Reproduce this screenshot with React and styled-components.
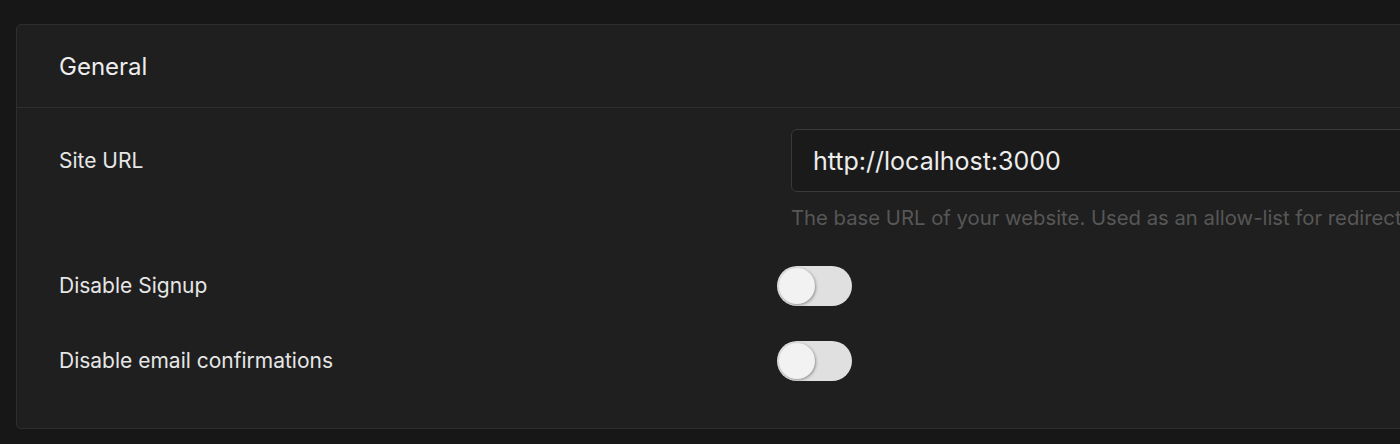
import React, { useState } from 'react';
import styled, { createGlobalStyle } from 'styled-components';

const GlobalStyle = createGlobalStyle`
  html, body {
    margin: 0;
    padding: 0;
    background: #171717;
    overflow: hidden;
  }
  body {
    font-family: 'Inter', 'Noto Sans', sans-serif;
  }
`;

const Page = styled.div`
  width: 1400px;
  height: 444px;
  padding: 24px 0 0 16px;
  box-sizing: border-box;
  overflow: hidden;
`;

const Card = styled.section`
  width: 1440px;
  background: #1f1f1f;
  border: 1px solid #2e2e2e;
  border-radius: 5px;
  box-sizing: border-box;
`;

const CardHeader = styled.header`
  height: 83px;
  display: flex;
  align-items: center;
  padding-left: 42px;
  border-bottom: 1px solid #2e2e2e;
  box-sizing: border-box;
`;

const Title = styled.h2`
  margin: 0;
  font-size: 24px;
  font-weight: 400;
  color: #ededed;
`;

const CardBody = styled.div`
  padding: 21px 0 47px 42px;
  display: flex;
  flex-direction: column;
`;

const Row = styled.div`
  display: grid;
  grid-template-columns: 718px 1fr;
  align-items: ${p => (p.top ? 'start' : 'center')};
  margin-bottom: ${p => p.gap || 0}px;
`;

const Label = styled.label`
  font-size: 21px;
  color: #e6e6e6;
  line-height: ${p => (p.tall ? '63px' : '40px')};
`;

const Field = styled.div`
  display: flex;
  flex-direction: column;
  padding-left: 14px;
`;

const Input = styled.input`
  height: 63px;
  width: 700px;
  box-sizing: border-box;
  background: #1a1a1a;
  border: 1px solid #3a3a3a;
  border-radius: 6px;
  padding: 0 21px;
  font-family: inherit;
  font-size: 25px;
  color: #ededed;
  outline: none;
`;

const Help = styled.p`
  margin: 14px 0 0;
  font-size: 20.3px;
  line-height: 24px;
  color: #575757;
  white-space: nowrap;
`;

const Track = styled.button`
  width: 75px;
  height: 40px;
  border-radius: 20px;
  border: none;
  padding: 2px;
  background: #e0e0e0;
  display: flex;
  align-items: center;
  justify-content: ${p => (p.on ? 'flex-end' : 'flex-start')};
  cursor: pointer;
  box-sizing: border-box;
`;

const Knob = styled.span`
  width: 36px;
  height: 36px;
  border-radius: 50%;
  background: #f2f2f2;
  box-shadow: 1px 1px 3px rgba(0, 0, 0, 0.35);
`;

const Toggle = () => {
  const [on, setOn] = useState(false);
  return (
    <Track on={on ? 1 : 0} onClick={() => setOn(!on)}>
      <Knob />
    </Track>
  );
};

export default function App() {
  return (
    <>
      <GlobalStyle />
      <Page>
        <Card>
          <CardHeader>
            <Title>General</Title>
          </CardHeader>
          <CardBody>
            <Row top gap={36}>
              <Label tall>Site URL</Label>
              <Field>
                <Input defaultValue="http://localhost:3000" />
                <Help>The base URL of your website. Used as an allow-list for redirects.</Help>
              </Field>
            </Row>
            <Row gap={35}>
              <Label>Disable Signup</Label>
              <Toggle />
            </Row>
            <Row>
              <Label>Disable email confirmations</Label>
              <Toggle />
            </Row>
          </CardBody>
        </Card>
      </Page>
    </>
  );
}
